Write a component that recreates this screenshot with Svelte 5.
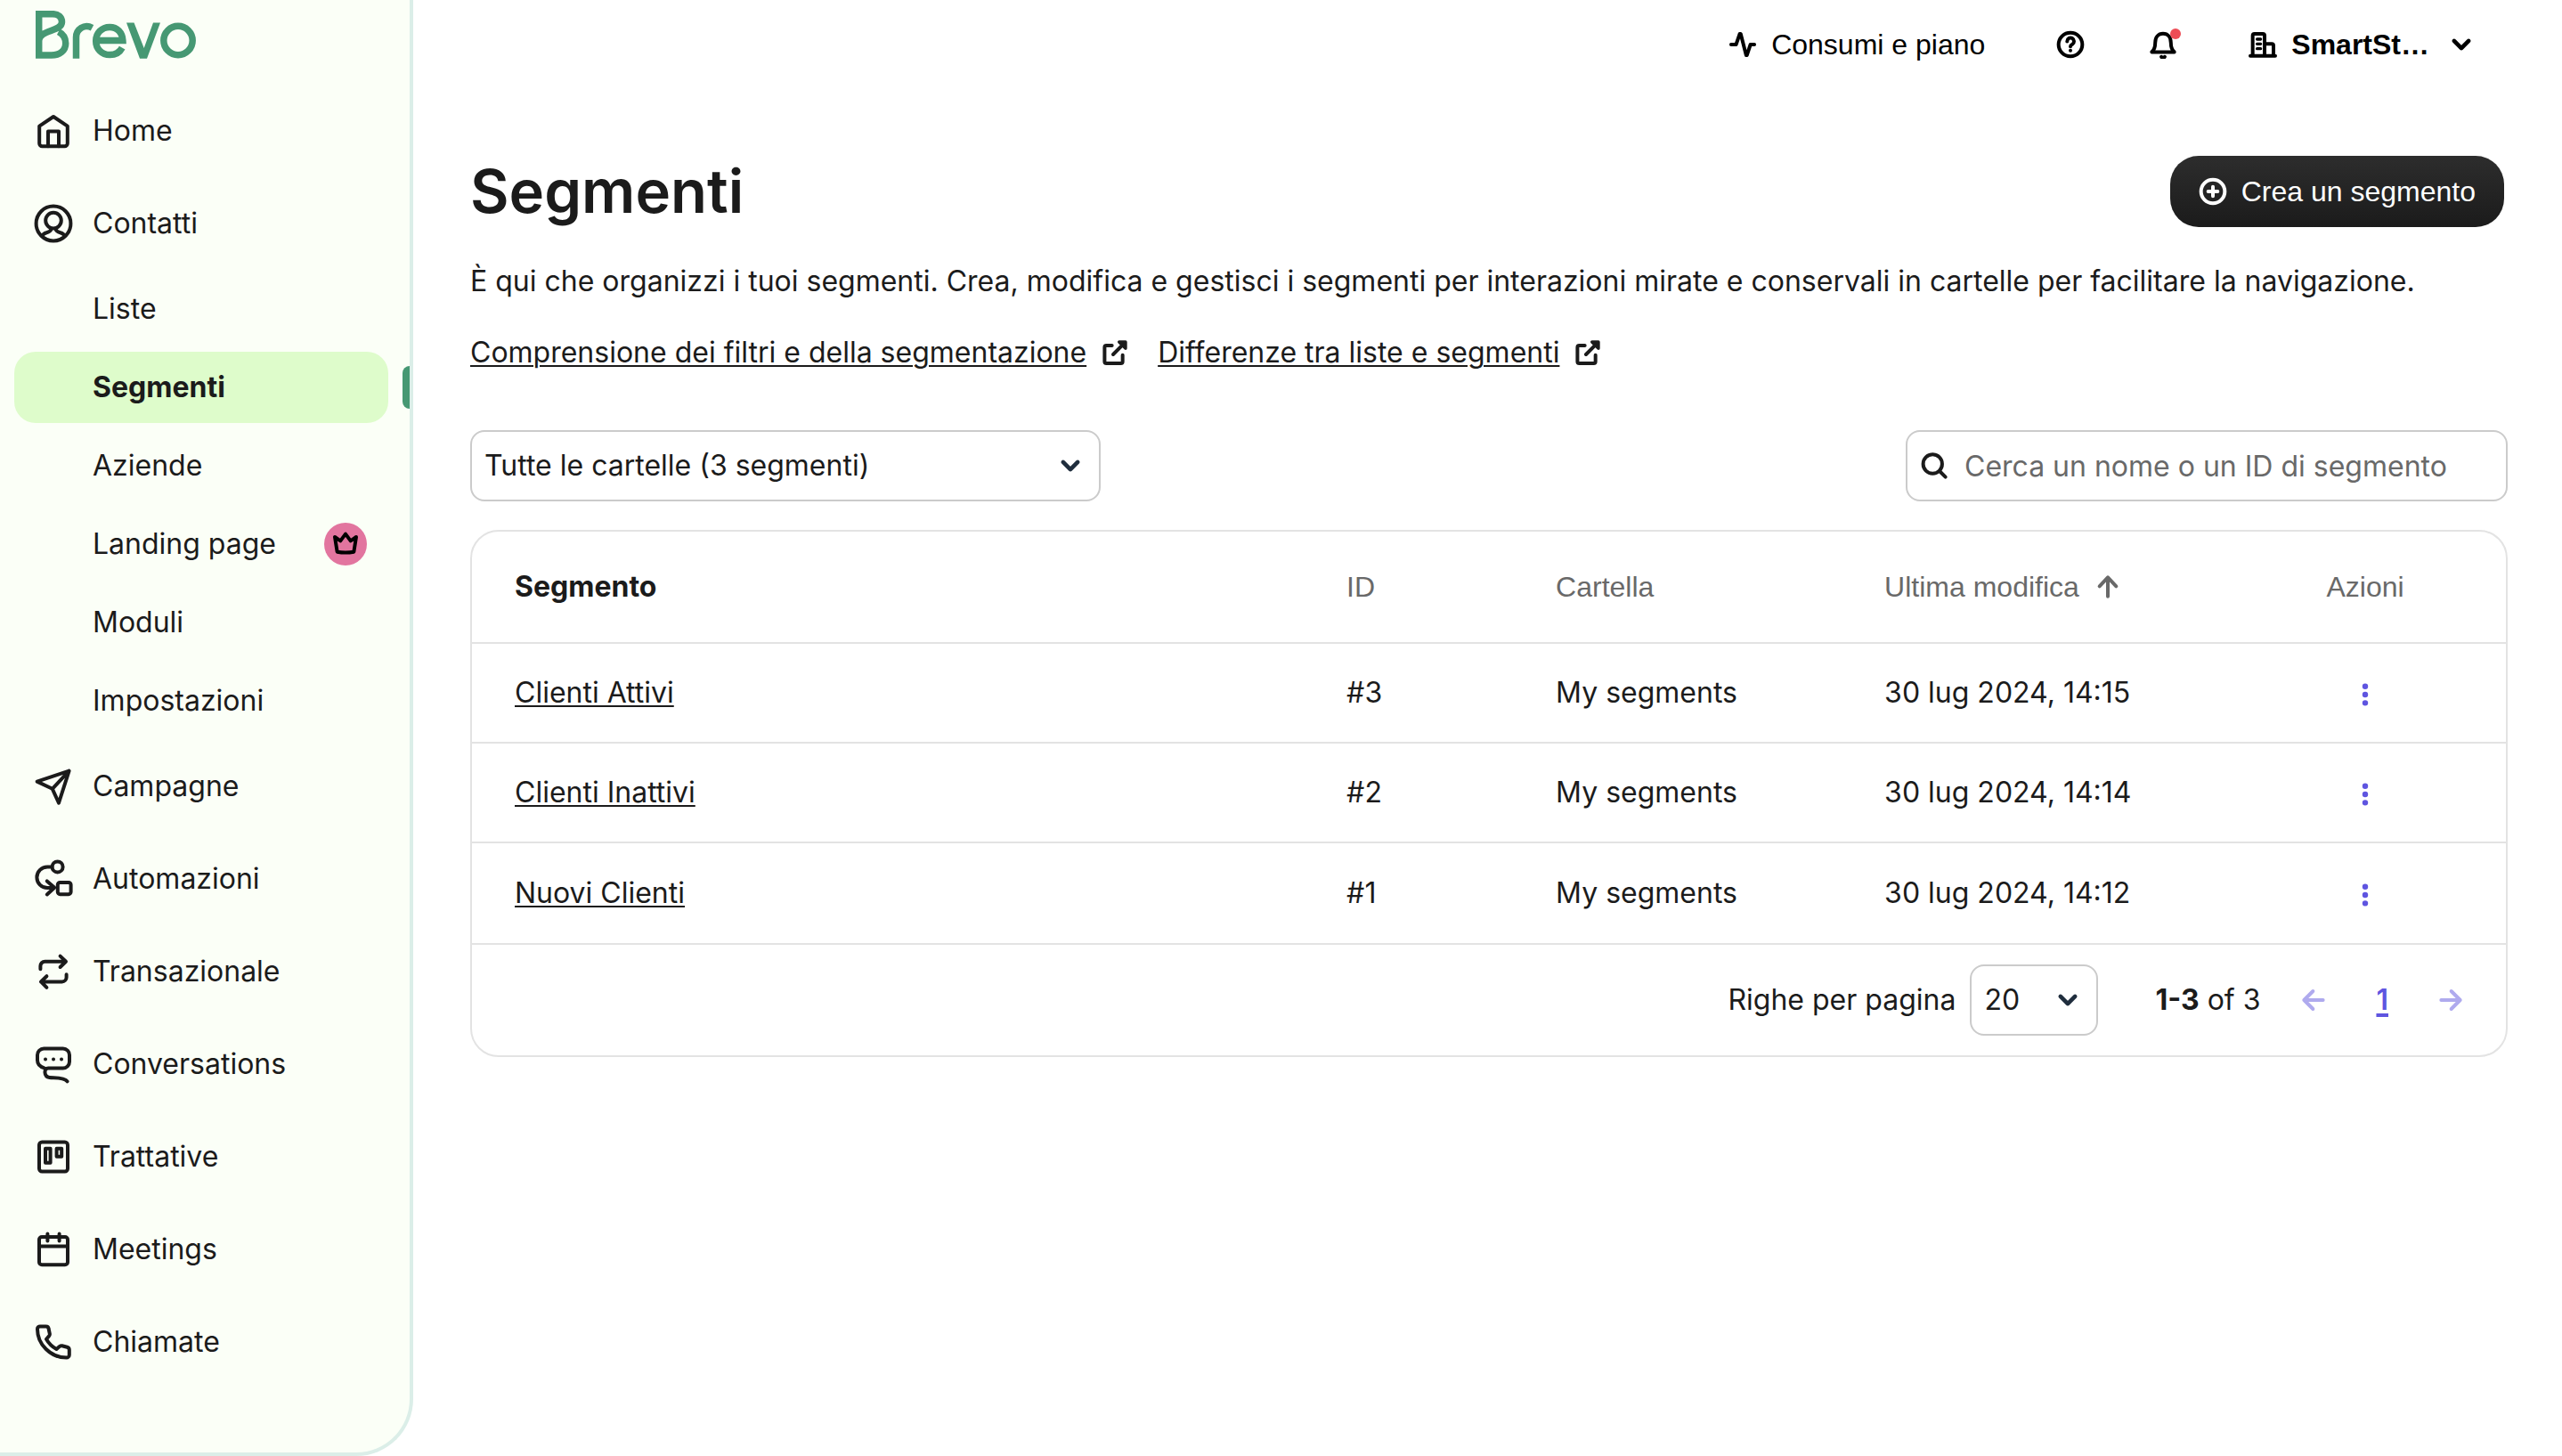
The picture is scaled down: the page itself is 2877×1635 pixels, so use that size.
<script>
  const icons = {
    home: '<path d="M4.1 9.3 12 4l7.900 5.300V19a1.600 1.600 0 0 1-1.600 1.600H5.700A1.600 1.600 0 0 1 4.100 19z"/><path d="M9 20.600v-8.400h6v8.400"/>',
    contacts: '<circle cx="12" cy="12" r="9.700"/><circle cx="12" cy="10.300" r="4.400"/><path d="M5.800 18.900c.8-2.600 4.200-.9 5-3.900M18.200 18.900c-.8-2.600-4.200-.9-5-3.900"/>',
    send: '<path d="M20.800 3.300 2.800 9.300l8.600 4.100 3.600 7.900zM20.800 3.300l-9.400 10.100"/>',
    automation: '<circle cx="14.300" cy="5.200" r="3"/><path d="M11.200 5.200H8.600a5.900 5.900 0 0 0 0 11.800h3.700M8.400 13.200l4.200 3.700-4.200 3.800"/><rect x="14.400" y="14" width="7.400" height="6.600" rx="1.300"/>',
    repeat: '<path d="M4.700 10.600V8.900a2.500 2.500 0 0 1 2.500-2.500h11.600M15.800 3.300l3.200 3.100-3.200 3.100M19.300 13.600v1.600a2.500 2.500 0 0 1-2.500 2.500H5M8.200 14.600 5 17.700l3.200 3.200"/>',
    chat: '<path d="M6.900 14.200c-2.500-.7-3.900-2-3.900-4.400V6.900a3.600 3.600 0 0 1 3.600-3.600h10.800A3.600 3.600 0 0 1 21 6.900v3.700a3.600 3.600 0 0 1-3.600 3.600H9.100c-2.600 0-2.600 4.900.7 5.300 2.700.3 8.400-.2 10 2.200"/><path d="M7.500 9.200h.01M12 9.200h.01M16.500 9.200h.01" stroke-width="2"/>',
    board: '<rect x="4" y="3.800" width="16" height="16.400" rx="1.600"/><rect x="7.500" y="7.400" width="2.800" height="8"/><rect x="13.800" y="7.400" width="2.800" height="4.500"/>',
    calendar: '<rect x="4" y="5" width="16" height="15.600" rx="1.500"/><path d="M4 10.200h16M8.700 3.200v4M15.300 3.200v4"/>',
    phone: '<path d="M3 4.700a1.500 1.500 0 0 1 1.500-1.500h3.300c.8 0 1.400.5 1.500 1.300l.6 2.800c.1.500 0 1-.4 1.400L8 10.400a14.500 14.500 0 0 0 5.700 5.600l1.700-1.500c.4-.3.900-.5 1.400-.4l2.900.8c.7.200 1.200.8 1.200 1.500v2.800a1.600 1.600 0 0 1-1.600 1.600C10.500 20.800 3 13.400 3 4.700z"/>',
    activity: '<path d="M2.200 12h4.200L9.500 3h.8l4.600 18h.6l3-9h3.300"/>',
    help: '<circle cx="12" cy="12" r="10"/><path d="M9.200 9.300a2.900 2.900 0 1 1 4.400 2.500c-1 .6-1.600.9-1.600 1.800M12 17h.01"/>',
    building: '<path d="M3.500 21V4.500A1.500 1.500 0 0 1 5 3h7a1.500 1.500 0 0 1 1.500 1.500V21M13.500 11.500h6A1.500 1.500 0 0 1 21 13v8M1.500 21.500h21"/><path d="M7.200 7.500h3M7.200 11.500h3M7.200 15.500h3" stroke-width="2.500"/>',
    plus: '<circle cx="12" cy="12" r="10"/><path d="M12 8v8M8 12h8"/>',
    external: '<path d="M9.500 6H4.800A1.500 1.500 0 0 0 3.300 7.500v12A1.500 1.500 0 0 0 4.800 21H17a1.500 1.500 0 0 0 1.500-1.500V14M10.500 13.500 19 5"/><path d="M15.500 3H21v5.500z" fill="currentColor" stroke-width="2.500"/>',
    search: '<circle cx="10.700" cy="10.500" r="8"/><path d="m16.500 16.500 5 5"/>',
    chevron: '<path d="m5 8.500 7 7 7-7"/>',
    up: '<path d="M12 20V4.500M5 11.500l7-7.500 7 7.500"/>',
    left: '<path d="M20 12H4M11.500 4.500 4 12l7.500 7.500"/>',
    right: '<path d="M4 12h16M12.500 4.500 20 12l-7.500 7.500"/>',
    crown: '<path d="m3 6 2 12.500c4.500.8 9.500.8 14 0L21 6l-4.700 3.300L12 3.500 7.700 9.300z"/>',
    more: '<path d="M12 4v.01M12 12v.01M12 20v.01" stroke-width="5.500"/>'
  };

  const nav = [
    { label: 'Home', icon: 'home' },
    {
      label: 'Contatti',
      icon: 'contacts',
      children: [
        { label: 'Liste' },
        { label: 'Segmenti', active: true },
        { label: 'Aziende' },
        { label: 'Landing page', premium: true },
        { label: 'Moduli' },
        { label: 'Impostazioni' }
      ]
    },
    { label: 'Campagne', icon: 'send' },
    { label: 'Automazioni', icon: 'automation' },
    { label: 'Transazionale', icon: 'repeat' },
    { label: 'Conversations', icon: 'chat' },
    { label: 'Trattative', icon: 'board' },
    { label: 'Meetings', icon: 'calendar' },
    { label: 'Chiamate', icon: 'phone' }
  ];

  const segments = [
    { name: 'Clienti Attivi', id: '#3', folder: 'My segments', date: '30 lug 2024, 14:15' },
    { name: 'Clienti Inattivi', id: '#2', folder: 'My segments', date: '30 lug 2024, 14:14' },
    { name: 'Nuovi Clienti', id: '#1', folder: 'My segments', date: '30 lug 2024, 14:12' }
  ];
</script>

{#snippet icon(name, size = '')}
  <svg class="icon {size}" viewBox="0 0 24 24" aria-hidden="true">{@html icons[name]}</svg>
{/snippet}

<div class="app">
  <aside class="sidebar">
    <a class="logo" href="#home" aria-label="Brevo">
      <svg viewBox="0 0 180 54" aria-hidden="true">
        <g fill="none" stroke="currentColor" stroke-width="7.500">
          <path d="M3.700 37V3.700H19c6.500 0 10.500 3.600 10.500 9 0 11-25.800 8.500-25.800 21V50h14c9.500 0 16-5.300 16-13.300 0-6.200-3.300-10.600-8-13"/>
          <path d="M45.500 53.700V30c0-9 9-15.500 18-10.800" />
          <path d="M68.500 33.500h29.400c-.5-9-6.200-15-14.700-15-9 0-15.500 6.700-15.500 15.500s6.500 15.600 15.700 15.600c6.400 0 11-2.800 13.800-8"/>
          <circle cx="160" cy="33.500" r="16.200"/>
        </g>
        <path fill="currentColor" d="M102 13.500h8.500l11.200 28.500L132 13.500h8L125 53.700h-8z"/>
      </svg>
    </a>
    <nav aria-label="Principale">
      {#each nav as item}
        <a class="item" href="#{item.icon}">{@render icon(item.icon, 'nav-icon')}<span>{item.label}</span></a>
        {#each item.children ?? [] as child}
          <a class="subitem" class:active={child.active} href="#contacts" aria-current={child.active ? 'page' : undefined}>
            <span class="pill">
              <span>{child.label}</span>
              {#if child.premium}<span class="premium">{@render icon('crown', 'crown')}</span>{/if}
            </span>
          </a>
        {/each}
      {/each}
    </nav>
  </aside>

  <div class="page">
    <header class="topbar">
      <a class="usage" href="#usage">{@render icon('activity', 'bold')}<span>Consumi e piano</span></a>
      <button class="plain" aria-label="Aiuto">{@render icon('help', 'bold')}</button>
      <button class="plain" aria-label="Notifiche">
        <svg class="icon bold" viewBox="0 0 24 24" aria-hidden="true">
          <path d="M2.500 18.300h19c-2.200-1.800-2.900-4-2.900-7.800C18.600 5.800 16 2.900 12 2.900s-6.600 2.900-6.600 7.600c0 3.800-.7 6-2.900 7.800z" />
          <path d="M10.600 22.300a1.600 1.600 0 0 0 2.800 0" />
        </svg>
        <span class="dot"></span>
      </button>
      <button class="plain account">
        {@render icon('building', 'bold')}<strong>SmartSt…</strong>{@render icon('chevron', 'small')}
      </button>
    </header>

    <main>
      <div class="title-row">
        <h1>Segmenti</h1>
        <button class="primary">{@render icon('plus', 'bold')}<span>Crea un segmento</span></button>
      </div>
      <p class="intro">
        È qui che organizzi i tuoi segmenti. Crea, modifica e gestisci i segmenti per interazioni mirate e conservali in cartelle per facilitare la navigazione.
      </p>
      <div class="links">
        <a href="#filters"><span>Comprensione dei filtri e della segmentazione</span>{@render icon('external', 'heavy')}</a>
        <a href="#lists"><span>Differenze tra liste e segmenti</span>{@render icon('external', 'heavy')}</a>
      </div>

      <div class="filters">
        <div class="select folder">
          <select aria-label="Cartella"><option>Tutte le cartelle (3 segmenti)</option></select>
          {@render icon('chevron', 'small')}
        </div>
        <label class="search">
          {@render icon('search', 'heavy')}
          <input type="search" aria-label="Cerca" placeholder="Cerca un nome o un ID di segmento" />
        </label>
      </div>

      <section class="card">
        <table>
          <colgroup><col class="c-name" /><col class="c-id" /><col class="c-folder" /><col class="c-date" /><col /></colgroup>
          <thead>
            <tr>
              <th class="main-col">Segmento</th>
              <th>ID</th>
              <th>Cartella</th>
              <th><button class="sort">Ultima modifica {@render icon('up', 'arrow')}</button></th>
              <th class="actions">Azioni</th>
            </tr>
          </thead>
          <tbody>
            {#each segments as segment}
              <tr>
                <td><a href="#segment">{segment.name}</a></td>
                <td>{segment.id}</td>
                <td>{segment.folder}</td>
                <td>{segment.date}</td>
                <td class="actions"><button class="more" aria-label="Azioni per {segment.name}">{@render icon('more', 'dots')}</button></td>
              </tr>
            {/each}
          </tbody>
        </table>
        <footer>
          <label for="rows">Righe per pagina</label>
          <div class="select rows">
            <select id="rows"><option>20</option></select>
            {@render icon('chevron', 'small')}
          </div>
          <span class="range"><strong>1-3</strong> of 3</span>
          <div class="pager">
            <button class="step" aria-label="Pagina precedente" disabled>{@render icon('left', 'arrow')}</button>
            <a href="#page-1" aria-current="page">1</a>
            <button class="step" aria-label="Pagina successiva" disabled>{@render icon('right', 'arrow')}</button>
          </div>
        </footer>
      </section>
    </main>
  </div>
</div>

<style>
  :global(body) {
    background: #fff;
  }
  .app {
    --sans: Inter, 'Noto Sans', sans-serif;
    --ui: 'Liberation Sans', Arial, sans-serif;
    display: flex;
    min-height: 100vh;
    box-sizing: border-box;
    font: 32px/48px var(--sans);
    color: #1b1b1b;
  }
  .app * {
    box-sizing: border-box;
  }
  a {
    color: inherit;
    text-decoration: none;
  }
  button,
  select,
  input {
    margin: 0;
    padding: 0;
    border: 0;
    background: none;
    font: inherit;
    color: inherit;
  }
  .icon {
    flex: none;
    display: block;
    width: 32px;
    height: 32px;
    fill: none;
    stroke: currentColor;
    stroke-width: 3;
    stroke-linecap: round;
    stroke-linejoin: round;
  }
  .icon.nav-icon {
    width: 48px;
    height: 48px;
    stroke-width: 2;
  }
  .icon.small,
  .icon.dots {
    width: 28px;
    height: 28px;
  }
  .icon.small {
    stroke-width: 4;
  }
  .icon.crown {
    color: #000;
  }

  .sidebar {
    flex: none;
    width: 464px;
    background: #fbfff7;
    border: 4px solid #dbeee8;
    border-width: 0 4px 4px 0;
    border-bottom-right-radius: 64px;
  }
  .logo {
    display: block;
    width: 180px;
    margin: 12px 0 29px 40px;
    color: #469873;
  }
  .logo svg {
    display: block;
    width: 180px;
    height: 54px;
  }
  .item {
    display: flex;
    align-items: center;
    gap: 20px;
    height: 104px;
    padding-left: 36px;
  }
  .subitem {
    display: flex;
    align-items: center;
    justify-content: space-between;
    height: 88px;
    padding-left: 16px;
  }
  .pill {
    display: flex;
    align-items: center;
    justify-content: space-between;
    width: 420px;
    height: 80px;
    padding: 0 24px 0 88px;
    border-radius: 24px;
  }
  .active {
    font-weight: 700;
  }
  .active .pill {
    background: #defccb;
  }
  .active::after {
    content: '';
    width: 8px;
    height: 48px;
    border-radius: 8px 0 0 8px;
    background: #469873;
  }
  .premium {
    display: grid;
    place-items: center;
    width: 48px;
    height: 48px;
    border-radius: 50%;
    background: #e2759f;
  }

  .page {
    flex: 1;
    min-width: 0;
    padding: 0 61px 0 64px;
  }
  .topbar {
    display: flex;
    justify-content: flex-end;
    align-items: center;
    height: 100px;
    padding-right: 38px;
    font-family: var(--ui);
    color: #000;
  }
  .usage,
  .account {
    display: flex;
    align-items: center;
    gap: 16px;
  }
  .plain {
    position: relative;
    margin-left: 72px;
    cursor: pointer;
  }
  .usage + .plain,
  .plain.account {
    margin-left: 80px;
  }
  .account strong {
    margin-right: 6px;
  }
  .dot {
    position: absolute;
    top: -2px;
    right: -4px;
    width: 12px;
    height: 12px;
    border-radius: 50%;
    background: #ee4c56;
  }

  .title-row {
    display: flex;
    justify-content: space-between;
    align-items: center;
    margin-top: 75px;
    padding-right: 4px;
  }
  h1 {
    margin: 0;
    font-size: 67px;
    font-weight: 600;
    line-height: 80px;
  }
  .primary {
    display: flex;
    align-items: center;
    gap: 16px;
    height: 80px;
    padding: 0 32px;
    border-radius: 32px;
    background: linear-gradient(#2d2d2d, #1b1b1b);
    font-family: var(--ui);
    color: #fff;
  }
  .intro {
    margin: 37px 0 0;
  }
  .links {
    display: flex;
    gap: 32px;
    margin-top: 32px;
  }
  .links a {
    display: flex;
    align-items: center;
    gap: 16px;
  }
  .links span,
  td a {
    text-decoration: underline;
    text-decoration-thickness: 2px;
    text-underline-offset: 3px;
  }
  .filters {
    display: flex;
    justify-content: space-between;
    margin: 63px 0 32px;
  }
  .select {
    display: grid;
    grid-template-columns: 1fr 42px;
    align-items: center;
    height: 80px;
    border: 2px solid #cbcbcb;
    border-radius: 16px;
  }
  .select select {
    grid-area: 1 / 1 / 2 / 3;
    appearance: none;
    width: 100%;
    height: 76px;
    padding: 0 56px 0 14px;
    border-radius: 16px;
  }
  .select .icon {
    grid-area: 1 / 2;
    color: #1f2d3d;
    pointer-events: none;
  }
  .folder {
    width: 708px;
    grid-template-columns: 1fr 46px;
  }
  .rows {
    width: 144px;
    margin-left: 16px;
    grid-template-columns: 1fr 46px;
  }
  .search {
    display: flex;
    align-items: center;
    gap: 18px;
    width: 676px;
    height: 80px;
    padding: 0 14px;
    border: 2px solid #cbcbcb;
    border-radius: 16px;
  }
  .search input {
    flex: 1;
    min-width: 0;
    height: 76px;
    outline: 0;
    appearance: none;
  }
  .search input::placeholder {
    color: #696969;
    opacity: 1;
  }

  .card {
    border: 2px solid #e3e3e3;
    border-radius: 32px;
  }
  table {
    width: 100%;
    table-layout: fixed;
    border-collapse: separate;
    border-spacing: 0;
  }
  .c-name {
    width: 43%;
  }
  .c-id {
    width: 235px;
  }
  .c-folder {
    width: 369px;
  }
  .c-date {
    width: 382px;
  }
  th,
  td {
    height: 112px;
    padding: 0;
    border-bottom: 2px solid #e3e3e3;
    text-align: left;
  }
  th {
    height: 126px;
    font: 32px/48px var(--ui);
    color: #696969;
  }
  th.main-col {
    font: 700 32px/48px var(--sans);
    color: #1b1b1b;
  }
  th:first-child,
  td:first-child {
    padding-left: 48px;
  }
  th.actions,
  td.actions {
    text-align: center;
  }
  tbody tr:last-child td {
    height: 114px;
  }
  .sort {
    display: flex;
    align-items: center;
    gap: 16px;
  }
  .more {
    display: inline-block;
    vertical-align: middle;
    color: #5f55e0;
  }
  footer {
    display: flex;
    justify-content: flex-end;
    align-items: center;
    height: 124px;
    padding-right: 46px;
  }
  .range {
    margin-left: 64px;
  }
  .pager {
    display: flex;
    align-items: center;
    gap: 54px;
    margin-left: 44px;
  }
  .pager a {
    font-weight: 600;
    color: #5f55e0;
    text-decoration: underline;
    text-decoration-thickness: 4px;
    text-underline-offset: 4px;
  }
  .step {
    color: #afaaee;
  }
</style>
